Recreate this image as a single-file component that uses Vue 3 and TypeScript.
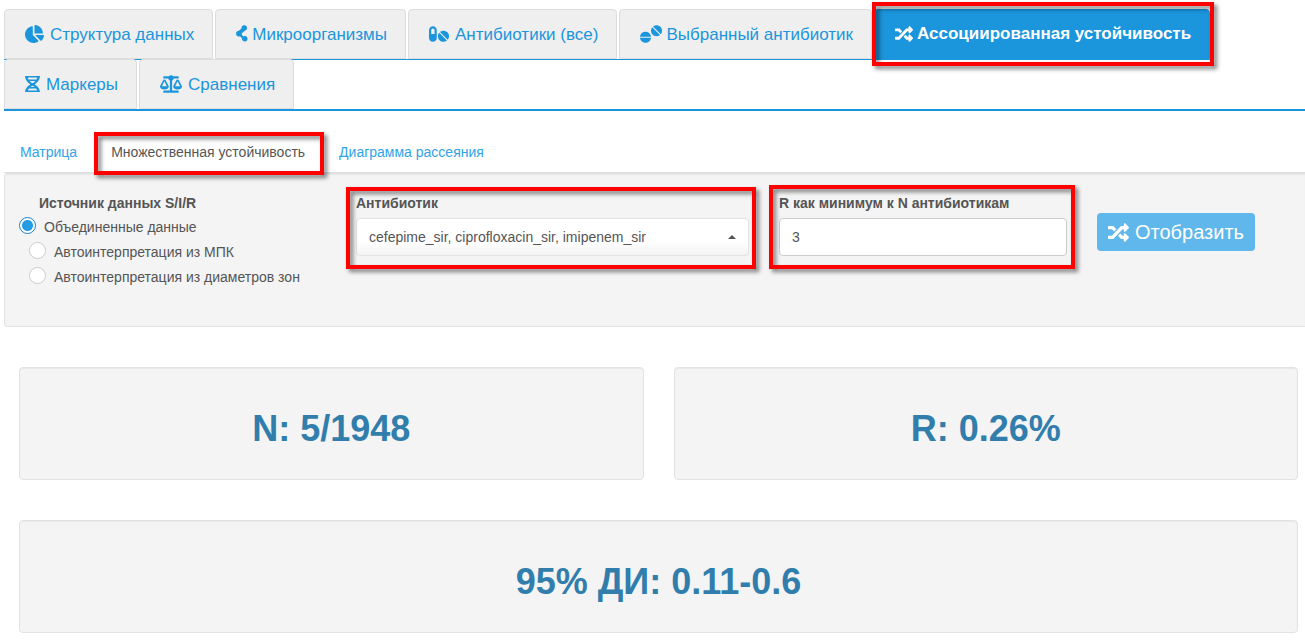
<script setup lang="ts">
import { ref } from 'vue'

interface Tab {
  label: string
  icon: string
  view: string
  width: number
  gap: string
  active?: boolean
}

const shuffle =
  'M504.971 359.029c9.373 9.373 9.373 24.569 0 33.941l-80 79.984c-15.01 15.01-40.971 4.49-40.971-16.971V416h-58.785a12.004 12.004 0 0 1-8.773-3.812l-70.556-75.596 53.333-57.143L352 336h32v-39.981c0-21.438 25.943-31.998 40.971-16.971l80 79.981zM12 176h84l52.781 56.551 53.333-57.143-70.556-75.596A11.999 11.999 0 0 0 122.785 96H12c-6.627 0-12 5.373-12 12v56c0 6.627 5.373 12 12 12zm372 0v39.984c0 21.46 25.961 31.98 40.971 16.971l80-79.984c9.373-9.373 9.373-24.569 0-33.941l-80-79.981C409.943 24.021 384 34.582 384 56.019V96h-58.785a12.004 12.004 0 0 0-8.773 3.812L96 336H12c-6.627 0-12 5.373-12 12v56c0 6.627 5.373 12 12 12h110.785c3.326 0 6.503-1.381 8.773-3.812L352 176h32z'

const tabs: Tab[] = [
  {
    label: 'Структура данных',
    view: '0 0 544 512', width: 19, gap: 'wide',
    icon: 'M527.79 288H290.5l158.03 158.03c6.04 6.04 15.98 6.53 22.19.68 38.7-36.46 65.32-85.61 73.13-140.86 1.34-9.46-6.51-17.85-16.06-17.85zm-15.83-64.8C503.72 103.74 408.26 8.28 288.8.04 279.68-.59 272 7.1 272 16.24V240h223.77c9.14 0 16.82-7.68 16.19-16.8zM224 288V50.71c0-9.55-8.39-17.4-17.84-16.06C86.99 51.49-4.1 155.6.14 280.37 4.5 408.51 114.83 513.59 243.03 511.98c50.4-.63 96.97-16.87 135.26-44.03 7.9-5.6 8.42-17.23 1.57-24.08L224 288z',
  },
  {
    label: 'Микроорганизмы',
    view: '0 0 12 18', width: 12, gap: 'narrow',
    icon: 'M5.500 3.500a2.800 2.800 0 1 1 3.400 2.300L5.800 8.300l.1 1.500 1.300 1.600a2.800 2.800 0 1 1-1.200 1.800L4 11.300A2.900 2.900 0 1 1 2.800 5.700z',
  },
  {
    label: 'Антибиотики (все)',
    view: '0 0 576 512', width: 20, gap: 'wide',
    icon: 'M112 32C50.1 32 0 82.1 0 144v224c0 61.9 50.1 112 112 112s112-50.1 112-112V144c0-61.9-50.1-112-112-112zm48 224H64V144c0-26.5 21.5-48 48-48s48 21.5 48 48v112zm139.7-29.7c-3.5-3.5-9.4-3.1-12.3.8-45.3 62.5-40.4 150.1 15.9 206.4 56.3 56.3 143.9 61.2 206.4 15.9 4-2.9 4.3-8.8.8-12.3L299.7 226.3zm229.8-19c-56.3-56.3-143.9-61.2-206.4-15.9-4 2.9-4.3 8.8-.8 12.3l210.8 210.8c3.5 3.5 9.4 3.1 12.3-.8 45.3-62.6 40.5-150.1-15.9-206.4z',
  },
  {
    label: 'Выбранный антибиотик',
    view: '0 0 640 512', width: 22, gap: 'narrow',
    icon: 'M160 192C78.9 192 12.5 250.5.1 326.7c-.8 4.8 3.3 9.3 8.3 9.3h303.3c5 0 9.1-4.5 8.3-9.3C307.5 250.5 241.1 192 160 192zm151.6 176H8.4c-5 0-9.1 4.5-8.3 9.3C12.5 453.5 78.9 512 160 512s147.5-58.5 159.9-134.7c.8-4.8-3.3-9.3-8.3-9.3zM593.4 46.6c-56.5-56.5-144.2-61.4-206.9-16-4 2.9-4.3 8.9-.8 12.3L597 254.3c3.5 3.5 9.5 3.2 12.3-.8 45.5-62.7 40.6-150.4-15.9-206.9zM363 65.7c-3.5-3.5-9.5-3.2-12.3.8-45.4 62.7-40.5 150.4 15.9 206.9 56.5 56.5 144.2 61.4 206.9 15.9 4-2.9 4.3-8.9.8-12.3L363 65.7z',
  },
  {
    label: 'Ассоциированная устойчивость',
    view: '0 0 512 512', width: 18, gap: 'narrow',
    icon: shuffle,
    active: true,
  },
  {
    label: 'Маркеры',
    view: '0 0 15 18', width: 15, gap: 'wide',
    icon: 'M0 1h2.600c.3 4 2 5.500 5 7.300 4 2.200 7 4.500 7.400 8.700h-2.600c-.3-3.500-2.500-5-5.500-6.700C3 8 .3 5.500 0 1zM15 1c-.3 4.500-3 7-6.900 9.300-3 1.700-5.200 3.200-5.500 6.700H0c.4-4.200 3.400-6.500 7.400-8.700 3-1.800 4.700-3.300 5-7.300zM2 1h11v1.600H2zM3 4.600h9v1.300H3zM3 12.100h9v1.300H3zM2 15.400h11V17H2z',
  },
  {
    label: 'Сравнения',
    view: '0 0 640 512', width: 22, gap: 'wide',
    icon: 'M256 336h-.02c0-16.18 1.34-8.73-85.05-181.51-17.65-35.29-68.19-35.36-85.87 0C-2.06 328.75.02 320.33.02 336H0c0 44.18 57.31 80 128 80s128-35.82 128-80zM128 176l72 144H56l72-144zm511.98 160c0-16.18 1.34-8.73-85.05-181.51-17.65-35.29-68.19-35.36-85.87 0-87.12 174.26-85.04 165.84-85.04 181.51H384c0 44.18 57.31 80 128 80s128-35.82 128-80h-.02zM440 320l72-144 72 144H440zm88 128H352V153.25c23.51-10.29 41.16-31.48 46.39-57.25H528c8.84 0 16-7.16 16-16V48c0-8.84-7.16-16-16-16H383.64C369.04 12.68 346.09 0 320 0s-49.04 12.68-63.64 32H112c-8.84 0-16 7.16-16 16v32c0 8.84 7.16 16 16 16h129.61c5.23 25.76 22.87 46.96 46.39 57.25V448H112c-8.84 0-16 7.16-16 16v32c0 8.84 7.16 16 16 16h416c8.84 0 16-7.16 16-16v-32c0-8.84-7.16-16-16-16z',
  },
]

const subTabs = [
  { label: 'Матрица', active: false },
  { label: 'Множественная устойчивость', active: true },
  { label: 'Диаграмма рассеяния', active: false },
]

const sources = [
  { value: 'merged', label: 'Объединенные данные' },
  { value: 'mic', label: 'Автоинтерпретация из МПК' },
  { value: 'zone', label: 'Автоинтерпретация из диаметров зон' },
]

const source = ref('merged')
const antibiotics = ref('cefepime_sir, ciprofloxacin_sir, imipenem_sir')
const minimum = ref('3')
</script>

<template>
  <div class="page">
    <nav>
      <ul class="tabs">
        <li v-for="tab in tabs" :key="tab.label">
          <a href="#" class="tab" :class="{ active: tab.active, marked: tab.active }">
            <svg :class="tab.gap" :viewBox="tab.view" :width="tab.width" height="18" aria-hidden="true">
              <path :d="tab.icon" fill="currentColor" />
            </svg>
            <span>{{ tab.label }}</span>
          </a>
        </li>
      </ul>
    </nav>

    <nav>
      <ul class="subtabs">
        <li v-for="tab in subTabs" :key="tab.label">
          <a href="#" class="subtab" :class="{ current: tab.active, marked: tab.active }">{{ tab.label }}</a>
        </li>
      </ul>
    </nav>

    <form class="well filters" @submit.prevent>
      <fieldset class="sources">
        <legend>Источник данных S/I/R</legend>
        <label v-for="item in sources" :key="item.value" :class="{ first: item.value === 'merged' }">
          <input v-model="source" type="radio" name="source" :value="item.value" />
          <span>{{ item.label }}</span>
        </label>
      </fieldset>

      <div class="field marked">
        <label for="antibiotics">Антибиотик</label>
        <div class="picker">
          <select id="antibiotics" v-model="antibiotics">
            <option>cefepime_sir, ciprofloxacin_sir, imipenem_sir</option>
          </select>
          <svg class="caret" viewBox="0 0 8 4" width="8" height="4" aria-hidden="true">
            <path d="M0 4 4 0l4 4z" fill="currentColor" />
          </svg>
        </div>
      </div>

      <div class="field marked tall">
        <label for="minimum">R как минимум к N антибиотикам</label>
        <input id="minimum" v-model="minimum" class="number" type="text" inputmode="numeric" />
      </div>

      <button type="submit" class="show">
        <svg viewBox="0 0 512 512" width="21" height="21" aria-hidden="true">
          <path :d="shuffle" fill="currentColor" />
        </svg>
        <span>Отобразить</span>
      </button>
    </form>

    <section class="results">
      <div class="well card"><h1>N: 5/1948</h1></div>
      <div class="well card"><h1>R: 0.26%</h1></div>
      <div class="well card full"><h1>95% ДИ: 0.11-0.6</h1></div>
    </section>
  </div>
</template>

<style>
body {
  margin: 0;
  background: #fff;
}
</style>

<style scoped>
.page {
  overflow: hidden;
  padding: 9px 0 11px 4px;
  color: #555;
  font: 14px/20px "Liberation Sans", Arial, sans-serif;
}
.page * {
  box-sizing: border-box;
}
a {
  color: #1b95dc;
  text-decoration: none;
}
ul {
  display: flex;
  margin: 0;
  padding: 0;
  list-style: none;
}
svg {
  flex: none;
}

.tabs {
  flex-wrap: wrap;
  border-bottom: 2px solid #1b95dc;
}
.tabs li {
  margin-bottom: -1px;
  padding-right: 2px;
  border-bottom: 1px solid #1b95dc;
}
.tab {
  display: flex;
  align-items: center;
  height: 50px;
  padding: 0 18px 0 20px;
  border: 1px solid #ddd;
  border-radius: 4px 4px 0 0;
  background: #efefef;
  font-size: 17px;
  white-space: nowrap;
}
.tab:not(.active) span,
.sources span {
  padding-top: 2px;
}
.tab .wide {
  margin-right: 6px;
}
.tab .narrow {
  margin-right: 4px;
}
.tab.active {
  border-color: #1b95dc;
  background: #1b95dc;
  color: #fff;
  font-weight: bold;
}

/* Red highlight frame laid over the element it marks */
.marked {
  position: relative;
}
.marked::after {
  content: "";
  position: absolute;
  z-index: 1;
  inset: -8px -5px -8px -3px;
  border: 4px solid #f00;
  filter: drop-shadow(3px 3px 2px rgba(0, 0, 0, 0.5));
  pointer-events: none;
}

.subtabs {
  margin-top: 21px;
  border-bottom: 1px solid #ddd;
}
.subtabs li {
  margin-right: 2px;
}
.subtab {
  display: block;
  padding: 10px 16px;
  color: #2fa4e7;
}
.subtab.current {
  color: #555;
}
.subtab.marked::after {
  inset: 0 -3px -3px -1px;
}

.well {
  border: 1px solid #e3e3e3;
  border-radius: 4px;
  background: #f4f4f4;
  box-shadow: inset 0 1px 1px rgba(0, 0, 0, 0.05);
}
.filters {
  display: grid;
  grid-template-columns: 307fr 393fr 288fr 208fr;
  column-gap: 30px;
  align-items: start;
  min-height: 154px;
  padding: 19px 0 0 14px;
  border-right: 0;
  border-radius: 4px 0 0 4px;
}
.sources {
  min-width: 0;
  margin: 0;
  padding: 0;
  border: 0;
}
.sources legend {
  padding: 0 0 0 20px;
  font-weight: bold;
}
.sources label {
  display: flex;
  align-items: center;
  height: 25px;
  padding-left: 10px;
  white-space: nowrap;
}
.sources label.first {
  padding-left: 0;
}
.sources input {
  appearance: none;
  width: 17px;
  height: 17px;
  margin: 0 8px 0 0;
  border: 1px solid #ccc;
  border-radius: 50%;
  background: #fff;
}
.sources input:checked {
  border-color: #1f7fc0;
  background: radial-gradient(circle, #259de5 5px, #fff 6px);
}
.field > label {
  display: block;
  margin-bottom: 5px;
  font-weight: bold;
}
.field.marked::after {
  inset: -6px -7px -13px -10px;
}
.field.tall::after {
  inset: -8px -8px -13px -10px;
}
.picker {
  position: relative;
}
select,
.number {
  display: block;
  width: 100%;
  height: 38px;
  margin: 0;
  padding: 0 12px;
  border: 1px solid #ccc;
  border-radius: 4px;
  background: #fff;
  color: #555;
  font: inherit;
}
select {
  appearance: none;
  border-color: #e3e3e3;
  background: linear-gradient(#fff 60%, #f4f4f4);
}
.caret {
  position: absolute;
  top: 17px;
  right: 13px;
}
.show {
  display: flex;
  align-items: center;
  justify-content: center;
  gap: 6px;
  justify-self: start;
  height: 38px;
  margin: 20px 0 0;
  padding: 0 11px;
  border: 0;
  border-radius: 4px;
  background: #60b7eb;
  color: #fff;
  font: 20px/38px "Liberation Sans", Arial, sans-serif;
}

.results {
  display: grid;
  grid-template-columns: 1fr 1fr;
  gap: 40px 30px;
  margin: 40px 7px 0 15px;
}
.card {
  padding: 41px 20px 31px;
  text-align: center;
}
.full {
  grid-column: 1 / -1;
}
h1 {
  margin: 0;
  color: #317eac;
  font-size: 36px;
  line-height: 39px;
}
</style>
